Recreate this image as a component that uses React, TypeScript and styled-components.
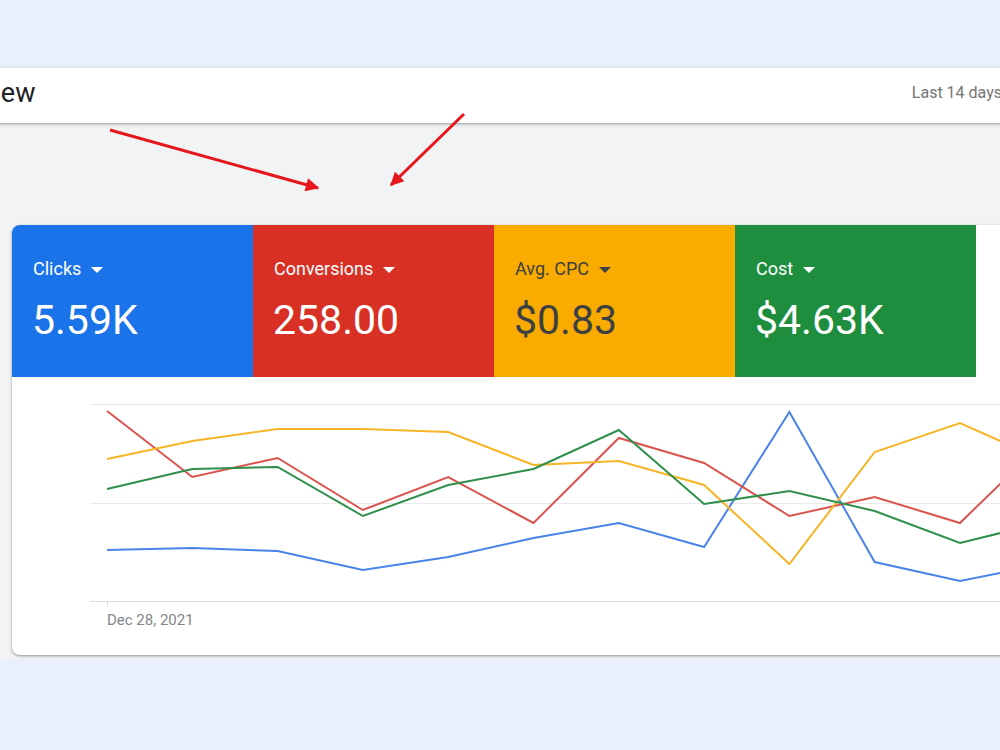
import React from 'react';
import styled, { createGlobalStyle } from 'styled-components';

const GlobalStyle = createGlobalStyle`
  html, body {
    margin: 0;
    padding: 0;
    overflow: hidden;
    background: #e9effb;
    font-family: Roboto, "Liberation Sans", Arial, sans-serif;
  }
`;

const palette = {
  blue: '#1a73e8',
  red: '#d93025',
  yellow: '#f9ab00',
  green: '#1e8e3e',
  ink: '#202124',
  muted: '#5f6368',
  grid: '#e8eaed',
};

const Page = styled.div`
  position: relative;
  width: 1000px;
  height: 750px;
  display: flex;
  flex-direction: column;
`;

const TopBand = styled.div`
  height: 68px;
  flex-shrink: 0;
`;

const Header = styled.header`
  position: relative;
  z-index: 1;
  width: 1030px;
  height: 55px;
  box-sizing: border-box;
  padding-bottom: 6px;
  flex-shrink: 0;
  display: flex;
  align-items: center;
  background: #fff;
  box-shadow: 0 1px 2px rgba(60, 64, 67, 0.35), 0 1px 3px 1px rgba(60, 64, 67, 0.15);
`;

const Title = styled.h1`
  margin: 0 0 0 -74px;
  font-size: 27px;
  font-weight: 400;
  color: ${palette.ink};
  white-space: nowrap;
`;

const DateRange = styled.span`
  margin-left: auto;
  padding-right: 28px;
  font-size: 16px;
  color: #757575;
  white-space: nowrap;
`;

const Main = styled.main`
  background: #f1f3f4;
  padding: 102px 0 5px 12px;
`;

const Card = styled.section`
  width: 1010px;
  height: 430px;
  background: #fff;
  border-radius: 8px;
  overflow: hidden;
  box-shadow: 0 1px 2px rgba(60, 64, 67, 0.35), 0 1px 3px 1px rgba(60, 64, 67, 0.15);
`;

const TileRow = styled.div`
  display: flex;
`;

const Tile = styled.div<{ $bg: string; $fg: string }>`
  width: 241px;
  height: 152px;
  box-sizing: border-box;
  padding: 33px 0 0 21px;
  background: ${(p) => p.$bg};
  color: ${(p) => p.$fg};
`;

const TileLabel = styled.div`
  display: flex;
  align-items: center;
  gap: 10px;
  font-size: 18px;
  line-height: 22px;
`;

const Caret = styled.span`
  width: 0;
  height: 0;
  border-left: 6px solid transparent;
  border-right: 6px solid transparent;
  border-top: 6px solid currentColor;
  margin-top: 2px;
`;

const TileValue = styled.div`
  margin-top: 15px;
  margin-left: -1px;
  font-size: 41px;
  line-height: 50px;
`;

const ChartBox = styled.div`
  display: flex;
  flex-direction: column;
`;

const ChartSvg = styled.svg`
  display: block;
`;

const AxisLabel = styled.div`
  margin: 0 0 0 95px;
  font-size: 15px;
  line-height: 18px;
  color: #80868b;
`;

const Overlay = styled.svg`
  position: absolute;
  z-index: 2;
  left: 0;
  top: 0;
  pointer-events: none;
`;

const metrics = [
  { label: 'Clicks', value: '5.59K', bg: palette.blue, fg: '#fff' },
  { label: 'Conversions', value: '258.00', bg: palette.red, fg: '#fff' },
  { label: 'Avg. CPC', value: '$0.83', bg: palette.yellow, fg: '#3c4043' },
  { label: 'Cost', value: '$4.63K', bg: palette.green, fg: '#fff' },
];

// page-space y values, one per day
const series = [
  { color: '#4a84e8', ys: [550, 548, 551, 570, 557, 538, 523, 547, 412, 562, 581, 564] },
  { color: '#d9544d', ys: [411, 477, 458, 510, 477, 523, 438, 463, 516, 497, 523, 440] },
  { color: '#f6b526', ys: [459, 441, 429, 429, 432, 465, 461, 485, 564, 452, 423, 461] },
  { color: '#2f8f4c', ys: [489, 469, 467, 516, 485, 469, 430, 504, 491, 511, 543, 522] },
];

const CHART_TOP = 377;
const toPoints = (ys: number[]) =>
  ys.map((y, i) => `${(95 + i * 85.3).toFixed(1)},${y - CHART_TOP}`).join(' ');

const Chart: React.FC = () => (
  <ChartBox>
    <ChartSvg width={988} height={234}>
      {[27, 126].map((y) => (
        <line key={y} x1={78} x2={988} y1={y + 0.5} y2={y + 0.5} stroke={palette.grid} />
      ))}
      <line x1={78} x2={988} y1={224.5} y2={224.5} stroke="#dadce0" />
      <line x1={95.5} x2={95.5} y1={224} y2={230} stroke="#dadce0" />
      {series.map((s) => (
        <polyline
          key={s.color}
          points={toPoints(s.ys)}
          fill="none"
          stroke={s.color}
          strokeWidth={2}
          strokeLinejoin="miter"
        />
      ))}
    </ChartSvg>
    <AxisLabel>Dec 28, 2021</AxisLabel>
  </ChartBox>
);

const Arrows: React.FC = () => (
  <Overlay width={1000} height={750}>
    <defs>
      <marker
        id="head"
        viewBox="0 0 10 10"
        refX="9"
        refY="5"
        markerWidth="6"
        markerHeight="4.5"
        orient="auto"
        markerUnits="strokeWidth"
      >
        <path d="M0,0 L10,5 L0,10 z" fill="#e5161c" />
      </marker>
    </defs>
    <line x1={110} y1={130} x2={318} y2={188} stroke="#e5161c" strokeWidth={3} markerEnd="url(#head)" />
    <line x1={464} y1={114} x2={391} y2={185} stroke="#e5161c" strokeWidth={3} markerEnd="url(#head)" />
  </Overlay>
);

const App: React.FC = () => (
  <Page>
    <GlobalStyle />
    <TopBand />
    <Header>
      <Title>Overview</Title>
      <DateRange>Last 14 days</DateRange>
    </Header>
    <Main>
      <Card>
        <TileRow>
          {metrics.map((m) => (
            <Tile key={m.label} $bg={m.bg} $fg={m.fg}>
              <TileLabel>
                {m.label}
                <Caret />
              </TileLabel>
              <TileValue>{m.value}</TileValue>
            </Tile>
          ))}
        </TileRow>
        <Chart />
      </Card>
    </Main>
    <Arrows />
  </Page>
);

export default App;
